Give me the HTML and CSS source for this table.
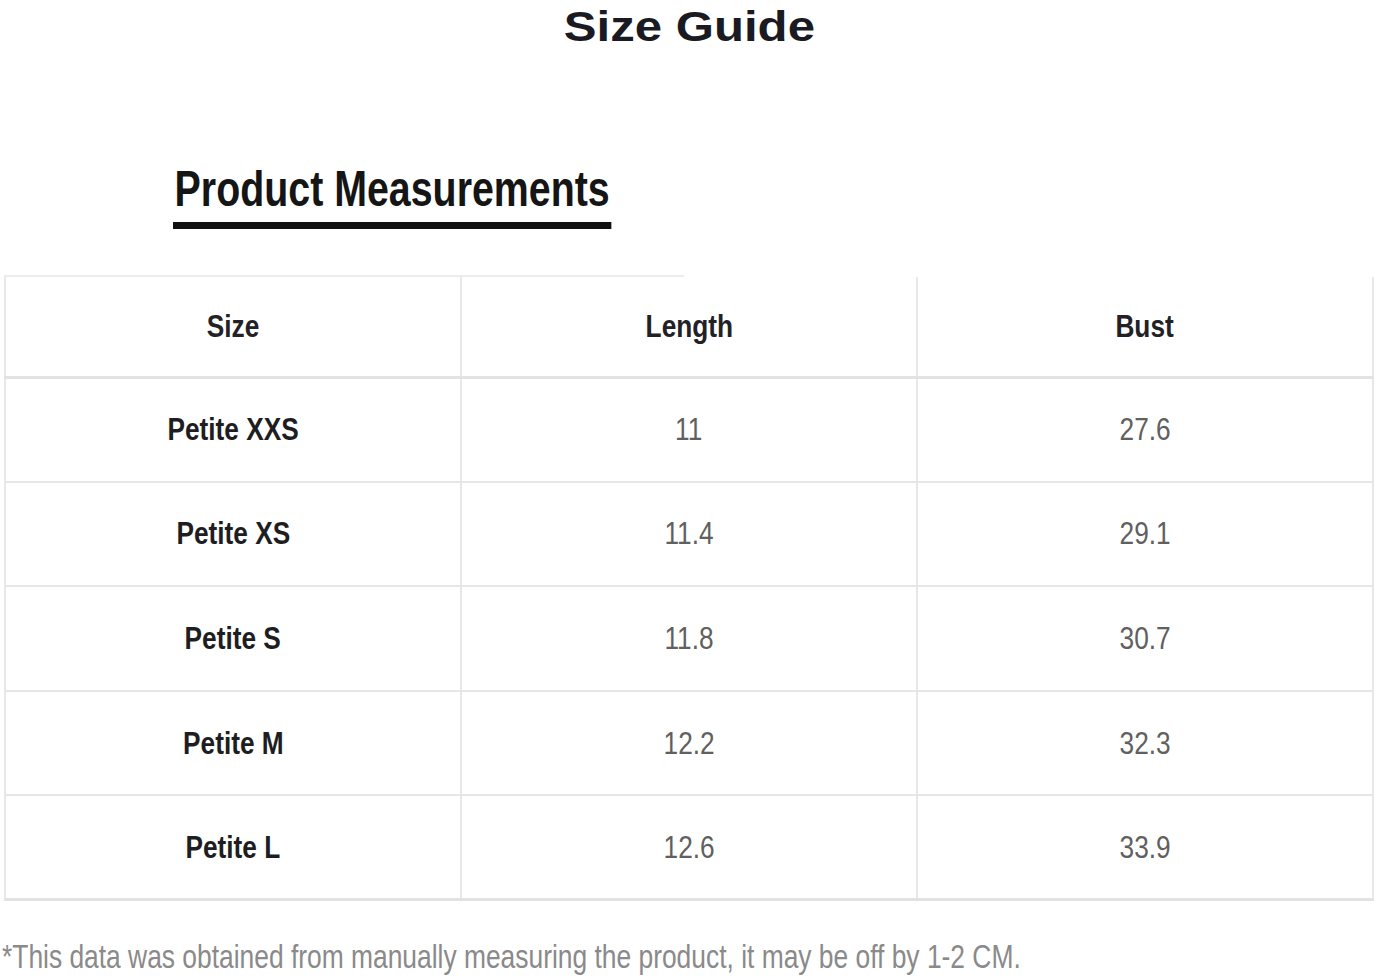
FILE: index.html
```html
<!DOCTYPE html>
<html lang="en">
<head>
<meta charset="utf-8">
<title>Size Guide</title>
<link rel="stylesheet" href="styles.css">
</head>
<body>
<div class="page">
  <h1 class="title"><span class="title-text">Size Guide</span></h1>
  <div class="section">
    <h2 class="section-title">Product Measurements</h2>
    <div class="section-rule"></div>
  </div>
  <div class="table-top"></div>
  <table class="sizes">
    <thead>
      <tr><th><span class="cell">Size</span></th><th><span class="cell">Length</span></th><th><span class="cell">Bust</span></th></tr>
    </thead>
    <tbody>
      <tr><td class="name"><span class="cell">Petite XXS</span></td><td><span class="cell">11</span></td><td><span class="cell">27.6</span></td></tr>
      <tr><td class="name"><span class="cell">Petite XS</span></td><td><span class="cell">11.4</span></td><td><span class="cell">29.1</span></td></tr>
      <tr><td class="name"><span class="cell">Petite S</span></td><td><span class="cell">11.8</span></td><td><span class="cell">30.7</span></td></tr>
      <tr><td class="name"><span class="cell">Petite M</span></td><td><span class="cell">12.2</span></td><td><span class="cell">32.3</span></td></tr>
      <tr><td class="name"><span class="cell">Petite L</span></td><td><span class="cell">12.6</span></td><td><span class="cell">33.9</span></td></tr>
    </tbody>
  </table>
  <p class="note"><span class="note-text">*This data was obtained from manually measuring the product, it may be off by 1-2 CM.</span></p>
</div>
</body>
</html>
```
FILE: styles.css
```css
html, body {
  margin: 0;
  padding: 0;
  background: #ffffff;
}
.page {
  width: 1378px;
  height: 980px;
  overflow: hidden;
  padding-left: 4px;
  box-sizing: border-box;
  font-family: "Liberation Sans", Arial, sans-serif;
}
.title {
  margin: 0;
  padding-top: 2px;
  padding-right: 4px;
  text-align: center;
  font-weight: 700;
  font-size: 42px;
  line-height: 50px;
  color: #1a1a22;
}
.title-text {
  display: inline-block;
  transform: scaleX(1.17);
}
.section {
  margin-top: 110px;
  margin-left: 169px;
  display: inline-flex;
  flex-direction: column;
  transform: scaleX(0.787);
  transform-origin: left center;
}
.section-title {
  margin: 0;
  font-weight: 700;
  font-size: 50px;
  line-height: 54px;
  color: #151515;
  padding: 0 2px;
}
.section-rule {
  height: 7px;
  margin-top: 6px;
  background: #111111;
}
.table-top {
  width: 680px;
  height: 2px;
  margin-top: 46px;
  background: #ececec;
}
.sizes {
  width: 1370px;
  border-collapse: collapse;
  table-layout: fixed;
}
.sizes th, .sizes td {
  text-align: center;
  vertical-align: middle;
  border-left: 2px solid #e8e8e8;
  border-right: 2px solid #e8e8e8;
  border-bottom: 2px solid #e6e6e6;
  padding: 0;
  box-sizing: border-box;
}
.cell {
  display: inline-block;
  transform: scaleX(0.82);
}
.sizes th {
  height: 100px;
  font-size: 32px;
  font-weight: 700;
  color: #222226;
  border-bottom: 3px solid #e2e2e2;
}
.sizes td {
  height: 104.6px;
  font-size: 32px;
  font-weight: 400;
  color: #606060;
}
.sizes td.name {
  font-weight: 700;
  color: #1e1e22;
}
.sizes tbody tr:last-child td {
  border-bottom: 3px solid #e2e2e2;
}
.note {
  margin: 35px 0 0 -2px;
  font-size: 34px;
  line-height: 40px;
  color: #8a8a8a;
  white-space: nowrap;
}
.note-text {
  display: inline-block;
  transform: scaleX(0.776);
  transform-origin: left center;
}
```
